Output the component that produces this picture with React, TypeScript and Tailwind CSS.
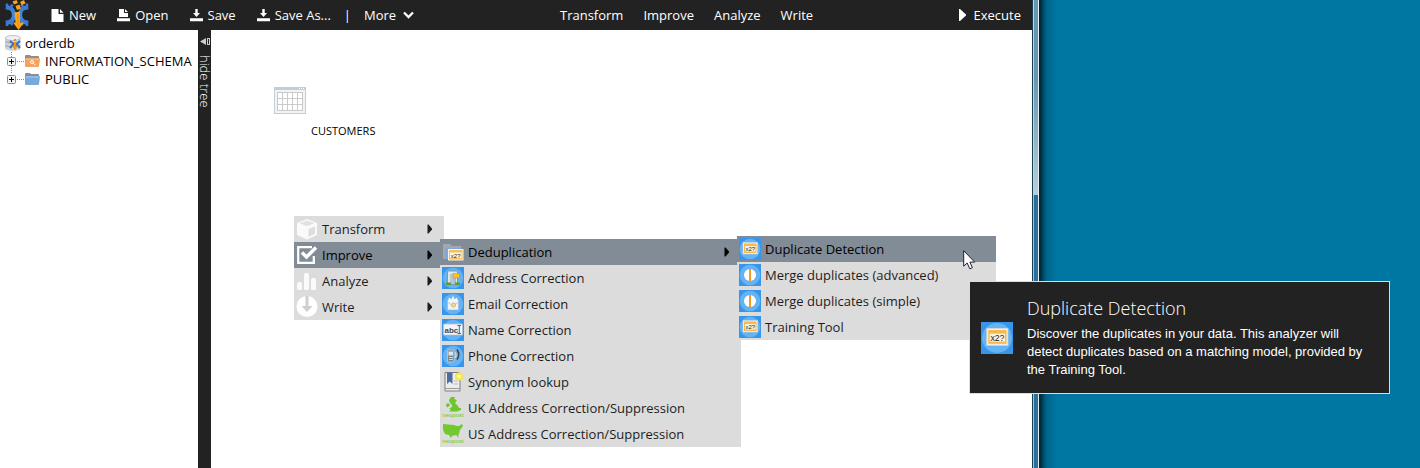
import React from "react";

type IconProps = { className?: string };

const Logo = () => (
  <svg viewBox="0 0 28 30" className="h-[30px] w-7 shrink-0" aria-hidden="true">
    <path d="M3 7q8 1 8 8t-8 8M25 7q-8 1-8 8t8 8" fill="none" stroke="#3f80d9" strokeWidth="4.200" />
    <path d="M4 3.500v6M9.500 4.500l-3 5M4 20.500v5.500M9.500 25l-2.500-4M24 3.500v6M18.500 4.500l3 5M24 20.500v5.500M18.500 25l2.500-4" stroke="#3a79d2" strokeWidth="2.600" />
    <path d="M9 12h10v6H9z" fill="#4386dd" />
    <path d="M9.500 1.500l4-1.500 1.500 3-4 1.500zM17 2l4-2 1.500 3.500-4 1.500zM12.500 6l4-1.500 1.500 4-4 1.500z" fill="#fba316" />
    <path d="M11.500 12.500l5.500-1v11h4L15.500 30 10 22.500h2.500z" fill="#fca413" />
    <path d="M14 14h1.500v14H15z" fill="#ee8b08" />
  </svg>
);

const NewIcon = () => (
  <svg viewBox="0 0 12 14" className="h-3.5 w-[13px]" aria-hidden="true">
    <path d="M0 1h7v5h5v8H0z M8.500 1 12 4.800H8.500z" fill="currentColor" />
  </svg>
);

const OpenIcon = () => (
  <svg viewBox="0 0 13 14" className="h-3.5 w-[13px]" aria-hidden="true">
    <path d="M2 1h5v4h4v4H2zM8 1l3 3H8zM0 10.300h13V13.300H0z" fill="currentColor" />
  </svg>
);

const SaveIcon = () => (
  <svg viewBox="0 0 13 14" className="h-3.5 w-[13px]" aria-hidden="true">
    <path d="M5.300 1h2.400v4h2.300L6.500 9 3 5h2.300zM0 10.300h13V13.300H0z" fill="currentColor" />
  </svg>
);

const RightArrow = () => (
  <svg viewBox="0 0 6 10" className="h-2.5 w-1.5 shrink-0" aria-hidden="true">
    <path d="M.5.500h1L5 4.500v1L1.500 9.500h-1z" fill="currentColor" />
  </svg>
);

const DatabaseIcon = () => (
  <svg viewBox="0 0 16 16" className="size-4 shrink-0" aria-hidden="true">
    <path d="M0 3v10c0 1.700 3 2.800 8 2.800s7.500-1.100 7.500-2.800V3z" fill="#cfd3d8" />
    <path d="M0 6.500c2 1.500 13 1.500 15.500 0M0 10.500c2 1.500 13 1.500 15.500 0" stroke="#9299a0" strokeWidth=".8" fill="none" />
    <ellipse cx="7.800" cy="3" rx="7.500" ry="2.500" fill="#f0f1f3" stroke="#a5abb1" strokeWidth=".7" />
    <path d="m5 6 3.500 3L5 13M15 6l-3.500 3 3.500 4" stroke="#2f73cf" strokeWidth="2" fill="none" />
    <path d="M9 4h2v2H9zM9 7h2v4h2l-3 4.500L7 11h2z" fill="#f59212" />
  </svg>
);

const FolderIcon = ({ search }: { search?: boolean }) => (
  <svg viewBox="0 0 15 14" className="h-3.5 w-[15px] shrink-0" aria-hidden="true">
    <path d="M0 2q0-1 1-1h4l1 1h7q1 0 1 1v9H0z" fill="#8a8f96" />
    <path d="M1 4h13q1 0 1 1l-1 7q0 1-1 1H1q-1 0-1-1V5q0-1 1-1z" fill={search ? "#f0a45d" : "#79a9dc"} />
    <path d="M1 5h13" stroke={search ? "#f8c796" : "#a9caed"} />
    {search && <path d="M5.500 8a1.500 1.500 0 1 0 3 0 1.500 1.500 0 1 0-3 0M8.500 9.300l2 2" stroke="#fff" fill="none" />}
  </svg>
);

const Branch = ({ last }: { last?: boolean }) => (
  <svg viewBox="0 0 20 18" className="h-[18px] w-5 shrink-0" aria-hidden="true">
    <path d={last ? "M6.500 0v4M12 9.500h7" : "M6.500 0v18M12 9.500h7"} stroke="#888" strokeDasharray="1 1" />
    <rect x="2.500" y="5.500" width="8" height="8" rx="1" fill="#f4f4f4" stroke="#8c8c8c" />
    <path d="M4 9.500h5M6.500 7v5" stroke="#000" />
  </svg>
);

const TableIcon = () => (
  <svg viewBox="0 0 32 27" className="h-[27px] w-8" aria-hidden="true">
    <rect x=".5" y=".5" width="31" height="26" fill="#f1f3f5" stroke="#c0ced9" />
    <path d="M1 2h30" stroke="#bfced9" strokeWidth="2" />
    <path d="M25 1.500h1m1 0h1m1 0h1" stroke="#fff" />
    <rect x="3.500" y="5.500" width="25" height="18" fill="#fff" stroke="#c8c8c8" />
    <path d="M8.500 5v19M13.500 5v19M18.500 5v19M23.500 5v19M3 11.500h26M3 17.500h26" stroke="#cacaca" />
  </svg>
);

const glyph = "size-[22px] shrink-0";

const CubeIcon = () => (
  <svg viewBox="0 0 22 22" className={glyph} aria-hidden="true">
    <path d="M11 1l10 4v12l-10 4.500L1 17V5z" fill="#fafafa" />
    <path d="M3.500 5.300l7.500-2.800 7.500 2.800-7.500 2.900z" fill="#e2e2e2" />
    <path d="M12.500 11l6.500-2.700v7.400l-6.500 3z" fill="#dedede" />
  </svg>
);

const CheckIcon = () => (
  <svg viewBox="0 0 22 22" className={glyph} aria-hidden="true">
    <path d="M16 3.200H2.200v15.600h15.600V12" fill="none" stroke="#fff" strokeWidth="2.200" />
    <path d="M6 8.500l4.500 4.500L20 3.500" fill="none" stroke="#fff" strokeWidth="3.500" />
  </svg>
);

const BarsIcon = () => (
  <svg viewBox="0 0 22 22" className={glyph} aria-hidden="true">
    <rect x="1" y="12" width="5" height="8" rx="1.500" fill="#fafafa" />
    <rect x="8" y="3" width="5" height="17" rx="1.500" fill="#fafafa" />
    <rect x="15" y="8" width="5" height="12" rx="1.500" fill="#fafafa" />
  </svg>
);

const WriteIcon = () => (
  <svg viewBox="0 0 22 22" className={glyph} aria-hidden="true">
    <circle cx="11" cy="10.500" r="10.500" fill="#fff" />
    <path d="M9.500 0h3v10h4L11 16 5.500 10h4z" fill="#cfcfcf" />
  </svg>
);

const Disc = () => (
  <>
    <rect width="22" height="22" fill="#3596ec" />
    <circle cx="11" cy="11" r="10.300" fill="#66b3f3" />
  </>
);

const DedupIcon = ({ className = glyph }: IconProps) => (
  <svg viewBox="0 0 22 22" className={className} aria-hidden="true">
    <Disc />
    <rect x="4" y="4.500" width="14.500" height="11.500" fill="#f5efe4" stroke="#d6dce0" strokeWidth=".5" />
    <rect x="5" y="5.500" width="12.500" height="9.500" fill="#f9b84c" />
    <rect x="6" y="8" width="10.500" height="5.500" fill="#fff3d9" />
    <text x="11.300" y="12.900" textAnchor="middle" fontSize="6" fill="#222" fontFamily="Liberation Sans, sans-serif">x2?</text>
  </svg>
);

const DedupFolderIcon = () => (
  <svg viewBox="0 0 22 22" className={glyph} aria-hidden="true">
    <path d="M1 3h7l2 2h9v4H6v9H1z" fill="#a5a7aa" />
    <path d="M3 7h16v11H3z" fill="#7baade" />
    <rect x="6" y="8" width="15.500" height="11.500" fill="#f8f2e5" />
    <rect x="7" y="9" width="13.500" height="9.500" fill="#fac05c" />
    <rect x="8" y="11.500" width="11.500" height="5.500" fill="#fff4dc" />
    <text x="13.700" y="16.500" textAnchor="middle" fontSize="6" fill="#222" fontFamily="Liberation Sans, sans-serif">x2?</text>
  </svg>
);

const MergeIcon = () => (
  <svg viewBox="0 0 22 22" className={glyph} aria-hidden="true">
    <Disc />
    <circle cx="11" cy="11" r="6" fill="#fff" />
    <path d="M11 5v12" stroke="#f59a23" strokeWidth="2" />
  </svg>
);

const AddressIcon = () => (
  <svg viewBox="0 0 22 22" className={glyph} aria-hidden="true">
    <Disc />
    <path d="M5.500 17V4h10v13z" fill="#dfe6ea" stroke="#7b8a96" strokeWidth=".8" />
    <path d="M8 7h4v9H8z" fill="#b4c7d4" />
    <rect x="11" y="6.500" width="6.500" height="4.500" fill="#fbc122" stroke="#c78f16" strokeWidth=".5" />
    <path d="M4 15.500h5V18H4zM13 15.500h5V18h-5z" fill="#5d9e2e" />
    <path d="M13 11v5" stroke="#7b8a96" />
  </svg>
);

const EmailIcon = () => (
  <svg viewBox="0 0 22 22" className={glyph} aria-hidden="true">
    <Disc />
    <path d="M5.500 7.500l2-2h7l2 2V17h-11z" fill="#edf3f7" stroke="#8fb9d8" strokeWidth=".6" />
    <path d="M7.500 8V5M11 7V3.500M14.500 8V5" stroke="#fff" strokeWidth="1.500" />
    <path d="M5.500 9l5.500 4 5.500-4" fill="none" stroke="#abc6d8" strokeWidth=".8" />
    <circle cx="11.500" cy="12" r="2" fill="#f6dc9b" stroke="#d9a94a" strokeWidth=".8" />
  </svg>
);

const NameIcon = () => (
  <svg viewBox="0 0 22 22" className={glyph} aria-hidden="true">
    <Disc />
    <rect x="1.500" y="5" width="19" height="11" fill="#f3f6f8" stroke="#a9bdcb" strokeWidth=".7" />
    <text x="2.500" y="13.500" fontSize="8" fontWeight="700" fill="#454545" fontFamily="Liberation Sans, sans-serif">abc</text>
    <path d="M15.500 6.500h3.500M17.300 6.500v8M15.500 14.500h3.500" stroke="#1675c8" />
  </svg>
);

const PhoneIcon = () => (
  <svg viewBox="0 0 22 22" className={glyph} aria-hidden="true">
    <Disc />
    <rect x="5.500" y="5" width="6.500" height="12" rx="1" fill="#7d8790" stroke="#d8dde1" strokeWidth=".6" />
    <rect x="6.500" y="6.500" width="4.500" height="4" fill="#dfe7ec" />
    <path d="M7 12.500h4M7 14.500h4" stroke="#ccd2d6" />
    <path d="M13 7q2 3 0 6" stroke="#f4cf86" strokeWidth="1.300" fill="none" />
    <path d="M15 4.500q3.500 5 0 10" stroke="#3c4044" strokeWidth="1.500" fill="none" />
  </svg>
);

const BookIcon = () => (
  <svg viewBox="0 0 22 22" className={glyph} aria-hidden="true">
    <path d="M3 1.500h13q2 0 2 2V20H3z" fill="#ececec" stroke="#7e7e7e" />
    <path d="M3 17.500h15" stroke="#9b9b9b" />
    <path d="M12 10h4M12 13h4" stroke="#bbb" />
    <path d="M5 1.500h5.500V13L7.800 10.500 5 13z" fill="#4d6c9f" />
    <circle cx="17" cy="5.500" r="4" fill="#f6e648" />
    <circle cx="17" cy="5.500" r="2" fill="#fffa8c" />
  </svg>
);

const Neopost = () => (
  <text x="11" y="20" textAnchor="middle" fontSize="6" fill="#6cc92a" fontFamily="Liberation Sans, sans-serif">neopost</text>
);

const UkIcon = () => (
  <svg viewBox="0 0 22 22" className={glyph} aria-hidden="true">
    <path d="M9 0h4l-1 2 3 1-2 3 3 3 1 2h2v2l-4 1.500H7l2-2-2-1 3-1.500V8L8 6 7 3zM4.500 6.500h2.500l1 2-3 2-1-2z" fill="#6fc52c" />
    <Neopost />
  </svg>
);

const UsIcon = () => (
  <svg viewBox="0 0 22 22" className={glyph} aria-hidden="true">
    <path d="M1 1l11 1 3 1 2 0 3-2 1 2-3 4-1 4-1 1 1 3-3-3-4 1-1 2-2-3-4-1-2-4z" fill="#72c92d" />
    <Neopost />
  </svg>
);

type Item = { label: string; icon: React.ReactNode; active?: boolean; sub?: boolean };

const components: Item[] = [
  { label: "Transform", icon: <CubeIcon />, sub: true },
  { label: "Improve", icon: <CheckIcon />, sub: true, active: true },
  { label: "Analyze", icon: <BarsIcon />, sub: true },
  { label: "Write", icon: <WriteIcon />, sub: true },
];

const improvements: Item[] = [
  { label: "Deduplication", icon: <DedupFolderIcon />, sub: true, active: true },
  { label: "Address Correction", icon: <AddressIcon /> },
  { label: "Email Correction", icon: <EmailIcon /> },
  { label: "Name Correction", icon: <NameIcon /> },
  { label: "Phone Correction", icon: <PhoneIcon /> },
  { label: "Synonym lookup", icon: <BookIcon /> },
  { label: "UK Address Correction/Suppression", icon: <UkIcon /> },
  { label: "US Address Correction/Suppression", icon: <UsIcon /> },
];

const deduplication: Item[] = [
  { label: "Duplicate Detection", icon: <DedupIcon />, active: true },
  { label: "Merge duplicates (advanced)", icon: <MergeIcon /> },
  { label: "Merge duplicates (simple)", icon: <MergeIcon /> },
  { label: "Training Tool", icon: <DedupIcon /> },
];

const Menu = ({ items, label, className }: { items: Item[]; label: string; className: string }) => (
  <div role="menu" aria-label={label} className={`absolute flex flex-col bg-[#dcdcdc] text-[#1c1c1c] ${className}`}>
    {items.map((item) => (
      <button
        key={item.label}
        type="button"
        role="menuitem"
        className={`flex h-[26px] items-center gap-1 pr-[11px] pl-0.5 text-left whitespace-nowrap ${item.active ? "bg-[#828c96] text-black" : ""}`}
      >
        {item.icon}
        <span className="flex-1">{item.label}</span>
        {item.sub && <RightArrow />}
      </button>
    ))}
  </div>
);

const ToolButton = ({ icon, children }: { icon?: React.ReactNode; children: React.ReactNode }) => (
  <button type="button" className="flex items-center gap-[5px] whitespace-nowrap">
    {icon}
    {children}
  </button>
);

export default function App() {
  return (
    <div className="flex min-h-screen bg-[#0077a3] font-['Open_Sans',sans-serif] text-[13px] leading-[18px] text-black">
      <main className="flex min-w-0 flex-1 flex-col bg-white">
        <header className="flex h-[30px] items-center bg-[#222] text-white">
          <div className="flex w-[560px] shrink-0 items-center">
            <div className="w-[51px] pl-[3px]">
              <Logo />
            </div>
            <div className="flex items-center gap-[21px]">
              <ToolButton icon={<NewIcon />}>New</ToolButton>
              <ToolButton icon={<OpenIcon />}>Open</ToolButton>
              <ToolButton icon={<SaveIcon />}>Save</ToolButton>
              <ToolButton icon={<SaveIcon />}>Save As...</ToolButton>
            </div>
            <span className="px-[13px]">|</span>
            <button type="button" className="flex items-center gap-[7px]">
              More
              <svg viewBox="0 0 11 8" className="h-2 w-[11px]" aria-hidden="true">
                <path d="M1 1.500l4.500 4.500L10 1.500" fill="none" stroke="currentColor" strokeWidth="2.300" />
              </svg>
            </button>
          </div>
          <nav className="flex items-center gap-5">
            <ToolButton>Transform</ToolButton>
            <ToolButton>Improve</ToolButton>
            <ToolButton>Analyze</ToolButton>
            <ToolButton>Write</ToolButton>
          </nav>
          <button type="button" className="mr-[11px] ml-auto flex items-center gap-2">
            <svg viewBox="0 0 7 12" className="h-3 w-[7px]" aria-hidden="true">
              <path d="M0 0h1l6 5.500v1L1 12H0z" fill="currentColor" />
            </svg>
            Execute
          </button>
        </header>

        <div className="flex flex-1">
          <aside className="w-[198px] shrink-0 pt-1">
            <ul>
              <li className="flex items-center gap-1 pl-[5px]">
                <DatabaseIcon />
                orderdb
              </li>
              <li className="flex items-center pl-[5px]">
                <Branch />
                <FolderIcon search />
                <span className="pl-[5px]">INFORMATION_SCHEMA</span>
              </li>
              <li className="flex items-center pl-[5px]">
                <Branch last />
                <FolderIcon />
                <span className="pl-[5px]">PUBLIC</span>
              </li>
            </ul>
          </aside>

          <button type="button" className="flex w-[13px] shrink-0 flex-col items-center gap-2.5 bg-[#222] pt-2 text-white">
            <svg viewBox="0 0 10 7" className="h-[7px] w-2.5" aria-hidden="true">
              <path d="M0 3.500L6 0v7z" fill="#ccc" />
              <rect x="7.500" y=".5" width="2" height="6" fill="none" stroke="#ccc" />
            </svg>
            <span className="leading-[13px] font-light [writing-mode:vertical-rl]">hide tree</span>
          </button>

          <section className="relative flex-1">
            <div className="absolute top-[57px] left-[63px]">
              <TableIcon />
            </div>
            <span className="absolute top-[92px] left-[100px] text-[11px]">CUSTOMERS</span>

            <Menu items={components} label="Components" className="top-[186px] left-[83px] w-[150px]" />
            <Menu items={improvements} label="Improve" className="top-[209px] left-[229px] w-[301px]" />
            <Menu items={deduplication} label="Deduplication" className="top-[206px] left-[526px] w-[259px]" />

            <div role="tooltip" className="absolute top-[251px] left-[758px] z-10 flex w-[421px] items-center gap-3.5 border border-[#dcdcdc] bg-[#222] py-3.5 pr-[22px] pl-[11px] text-white">
              <DedupIcon className="size-8 shrink-0" />
              <div className="font-['Liberation_Sans',Arial,sans-serif]">
                <h2 className="pb-1 font-['Open_Sans',sans-serif] text-[18px] leading-[25px] font-light">Duplicate Detection</h2>
                <p>Discover the duplicates in your data. This analyzer will detect duplicates based on a matching model, provided by the Training Tool.</p>
              </div>
            </div>

            <svg viewBox="0 0 13 20" className="absolute top-[220px] left-[752px] z-20 h-5 w-[13px]" aria-hidden="true">
              <path d="M.7.700v15.500l3.500-3.200 2.600 5.800 2.600-1.100-2.500-5.600h4.800z" fill="#fff" stroke="#1c2233" />
            </svg>
          </section>
        </div>
      </main>

      <div className="flex w-[7px] shrink-0 flex-col border-x border-l-[#173f54] border-r-[#e2eff5]" aria-hidden="true">
        <div className="h-[195px] border-l border-[#b9dbe8] bg-linear-to-b from-[#6497b2] from-40% to-[#b7cfda]" />
        <div className="flex-1 border-l border-[#9cc4d8] bg-[#29709a]" />
      </div>
      <div className="w-[381px] shrink-0 bg-linear-to-r from-[#00202c] via-[#006389] via-[7px] to-[#0077a3] to-[18px]" aria-hidden="true" />
    </div>
  );
}
